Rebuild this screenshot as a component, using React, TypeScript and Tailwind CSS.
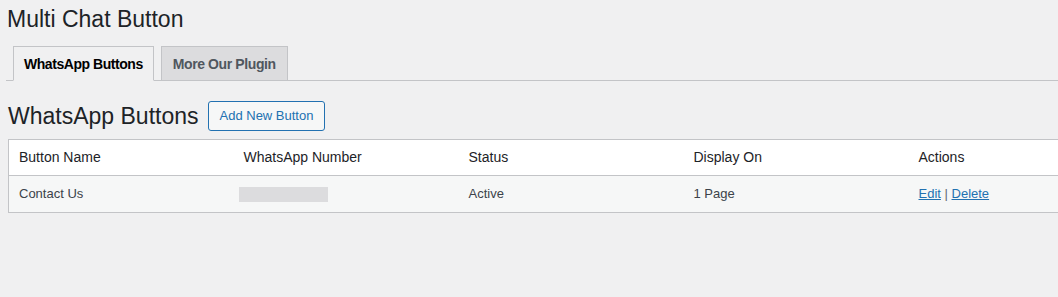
export default function App() {
  const rows = [
    { name: "Contact Us", status: "Active", display: "1 Page" },
  ];

  return (
    <div className="min-h-screen w-full overflow-hidden bg-[#f0f0f1] font-['Liberation_Sans',Arial,sans-serif] text-[#3c434a]">
      <div className="pl-[6px] pt-[4px]">
        <h1 className="ml-px text-[23px] leading-[30px] font-normal text-[#1d2327]">Multi Chat Button</h1>

        <nav className="mt-[12px] flex items-end border-b border-[#c3c4c7]">
          <a className="ml-[7px] -mb-px h-[35px] flex items-center px-[10px] border border-[#c3c4c7] border-b-[#f0f0f1] bg-[#f0f0f1] text-[14px] font-bold tracking-[-0.45px] text-[#000] leading-none">
            WhatsApp Buttons
          </a>
          <a className="ml-[7px] -mb-px h-[35px] flex items-center px-[11px] border border-[#c3c4c7] bg-[#dcdcde] text-[14px] font-bold tracking-[-0.4px] text-[#50575e] leading-none">
            More Our Plugin
          </a>
        </nav>

        <div className="mt-[20px] flex items-center gap-[9px]">
          <h2 className="ml-[2px] text-[23px] leading-[30px] font-normal text-[#1d2327]">WhatsApp Buttons</h2>
          <button className="h-[30px] px-[11px] rounded-[3px] border border-[#2271b1] bg-[#f6f7f7] text-[13px] text-[#2271b1]">
            Add New Button
          </button>
        </div>

        <table className="mt-[8px] ml-[2px] w-[1126px] border border-[#c3c4c7] border-collapse table-fixed">
          <thead>
            <tr className="bg-white border-b border-[#c3c4c7]">
              {["Button Name", "WhatsApp Number", "Status", "Display On", "Actions"].map((h) => (
                <th key={h} className="h-[36px] px-[10px] text-left text-[14px] font-normal text-[#1d2327]">
                  {h}
                </th>
              ))}
            </tr>
          </thead>
          <tbody>
            {rows.map((r) => (
              <tr key={r.name} className="bg-[#f6f7f7]">
                <td className="h-[37px] px-[10px] text-[13px]">{r.name}</td>
                <td className="h-[37px] px-[10px]">
                  <div className="ml-[-5px] h-[15px] w-[89px] bg-[#dcdcde]" />
                </td>
                <td className="h-[37px] px-[10px] text-[13px]">{r.status}</td>
                <td className="h-[37px] px-[10px] text-[13px]">{r.display}</td>
                <td className="h-[37px] px-[10px] text-[13px]">
                  <a className="text-[#2271b1] underline">Edit</a>
                  <span className="text-[#646970]"> | </span>
                  <a className="text-[#2271b1] underline">Delete</a>
                </td>
              </tr>
            ))}
          </tbody>
        </table>
      </div>
    </div>
  );
}
